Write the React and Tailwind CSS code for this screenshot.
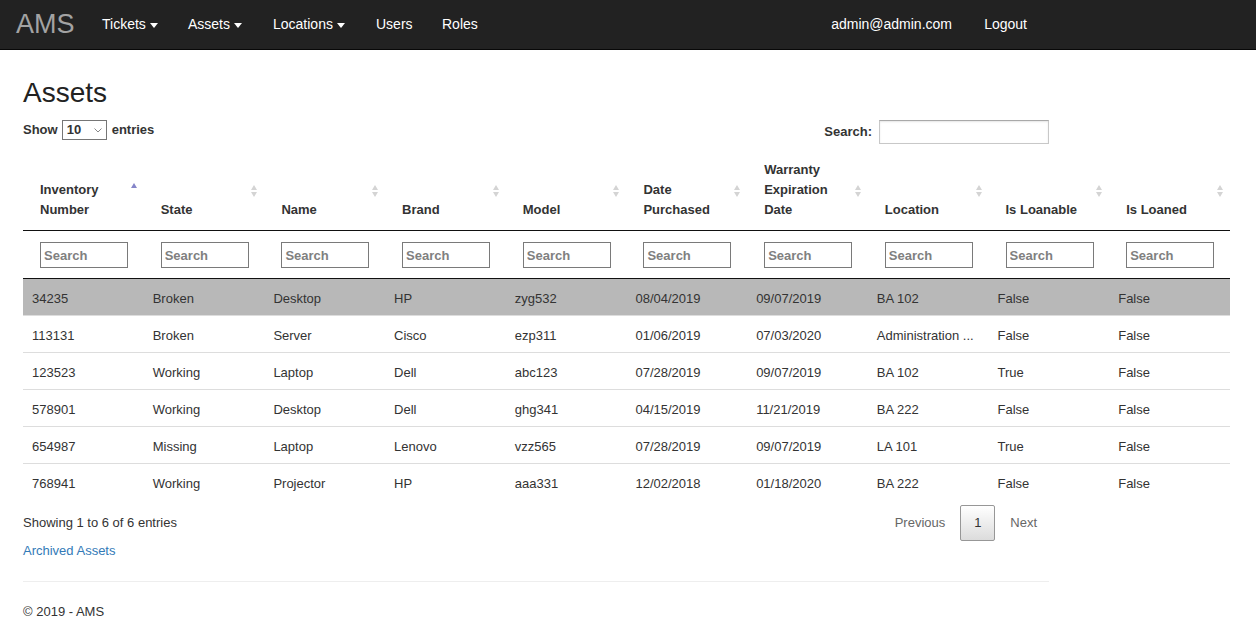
import React from 'react';

const columns = [
  'Inventory Number',
  'State',
  'Name',
  'Brand',
  'Model',
  'Date Purchased',
  'Warranty Expiration Date',
  'Location',
  'Is Loanable',
  'Is Loaned',
];

const assets = [
  ['34235', 'Broken', 'Desktop', 'HP', 'zyg532', '08/04/2019', '09/07/2019', 'BA 102', 'False', 'False'],
  ['113131', 'Broken', 'Server', 'Cisco', 'ezp311', '01/06/2019', '07/03/2020', 'Administration ...', 'False', 'False'],
  ['123523', 'Working', 'Laptop', 'Dell', 'abc123', '07/28/2019', '09/07/2019', 'BA 102', 'True', 'False'],
  ['578901', 'Working', 'Desktop', 'Dell', 'ghg341', '04/15/2019', '11/21/2019', 'BA 222', 'False', 'False'],
  ['654987', 'Missing', 'Laptop', 'Lenovo', 'vzz565', '07/28/2019', '09/07/2019', 'LA 101', 'True', 'False'],
  ['768941', 'Working', 'Projector', 'HP', 'aaa331', '12/02/2018', '01/18/2020', 'BA 222', 'False', 'False'],
];

function Caret() {
  return <span className="inline-block ml-[4px] w-0 h-0 border-x-[4px] border-x-transparent border-t-[5px] border-t-white align-middle"></span>;
}

function SortIcon({ active }) {
  if (active) {
    return (
      <span className="absolute right-[7px] top-[33px] w-0 h-0 border-x-[3.5px] border-x-transparent border-b-[5px] border-b-[#8585c9]"></span>
    );
  }
  return (
    <span className="absolute right-[7px] top-[35px] flex flex-col gap-[2px]">
      <span className="w-0 h-0 border-x-[3.5px] border-x-transparent border-b-[5px] border-b-[#d4d4d4]"></span>
      <span className="w-0 h-0 border-x-[3.5px] border-x-transparent border-t-[5px] border-t-[#d4d4d4]"></span>
    </span>
  );
}

export default function App() {
  return (
    <div className="min-h-[640px] bg-white text-[#333] text-[13px] font-['Liberation_Sans',Arial,sans-serif]">
      {/* Navbar */}
      <div className="h-[50px] bg-[#222] border-b border-[#080808] flex items-center text-[14px] text-white">
        <span className="ml-[16px] w-[86px] text-[27px] text-[#a3a3a3] leading-none">AMS</span>
        <span className="w-[86px]">Tickets<Caret /></span>
        <span className="w-[85px]">Assets<Caret /></span>
        <span className="w-[103px]">Locations<Caret /></span>
        <span className="w-[66px]">Users</span>
        <span>Roles</span>
        <div className="ml-auto pr-[229px] flex">
          <span className="w-[153px]">admin@admin.com</span>
          <span>Logout</span>
        </div>
      </div>

      {/* Content */}
      <div className="px-[23px] pt-[27px]">
        <h1 className="text-[28px] leading-[32px] text-[#222]">Assets</h1>

        <div className="w-[1026px] mt-[11px] flex justify-between items-start h-[24px]">
          <div className="flex items-center h-[20px] font-bold">
            <span>Show</span>
            <div className="ml-[4px] w-[45px] h-[20px] border border-[#767676] flex items-center justify-between px-[4px] bg-white">
              <span className="font-bold">10</span>
              <svg width="8" height="5" viewBox="0 0 8 5" fill="none" stroke="#888" strokeWidth="1">
                <path d="M0.5 0.5 L4 4 L7.5 0.5" />
              </svg>
            </div>
            <span className="ml-[5px]">entries</span>
          </div>
          <div className="flex items-center h-[24px] font-bold">
            <span>Search:</span>
            <div className="ml-[7px] w-[170px] h-[24px] border border-[#c8c8c8] border-t-[#a9a9a9] shadow-[inset_0_1px_2px_rgba(0,0,0,0.1)]"></div>
          </div>
        </div>

        {/* Table */}
        <table className="mt-[6px] w-[1207px] table-fixed border-collapse">
          <thead>
            <tr>
              {columns.map((c, i) => (
                <th
                  key={c}
                  className="relative align-bottom text-left font-bold pl-[17px] pr-[18px] py-[10px] leading-[20px] border-b border-[#111]"
                >
                  {c}
                  <SortIcon active={i === 0} />
                </th>
              ))}
            </tr>
            <tr>
              {columns.map((c) => (
                <th key={c} className="text-left pl-[17px] pt-[11px] pb-[10px] border-b border-[#111]">
                  <input
                    placeholder="Search"
                    className="w-[88px] h-[26px] border border-[#7a7a7a] px-[3px] text-[13px] font-bold placeholder:text-[#808080] outline-none"
                  />
                </th>
              ))}
            </tr>
          </thead>
          <tbody>
            {assets.map((row, r) => (
              <tr key={row[0]} className={r === 0 ? 'bg-[#b8b8b8]' : ''}>
                {row.map((cell, i) => (
                  <td
                    key={i}
                    className={`h-[37px] pl-[9px] pr-[4px] pt-[3px] whitespace-nowrap overflow-hidden ${r === 0 ? '' : 'border-t border-[#ddd]'}`}
                  >
                    {cell}
                  </td>
                ))}
              </tr>
            ))}
          </tbody>
        </table>

        <div className="w-[1026px] mt-[4px] h-[36px] flex items-center justify-between">
          <span>Showing 1 to 6 of 6 entries</span>
          <div className="flex items-center pr-[12px] text-[#666]">
            <span>Previous</span>
            <span className="ml-[15px] w-[35px] h-[36px] flex items-center justify-center text-[#333] border border-[#979797] rounded-[2px] bg-gradient-to-b from-white to-[#dcdcdc]">1</span>
            <span className="ml-[15px]">Next</span>
          </div>
        </div>

        <div className="leading-[20px] text-[#337ab7]">Archived Assets</div>
        <div className="w-[1026px] mt-[20px] border-t border-[#eee]"></div>
        <div className="mt-[20px] leading-[20px]">© 2019 - AMS</div>
      </div>
    </div>
  );
}
